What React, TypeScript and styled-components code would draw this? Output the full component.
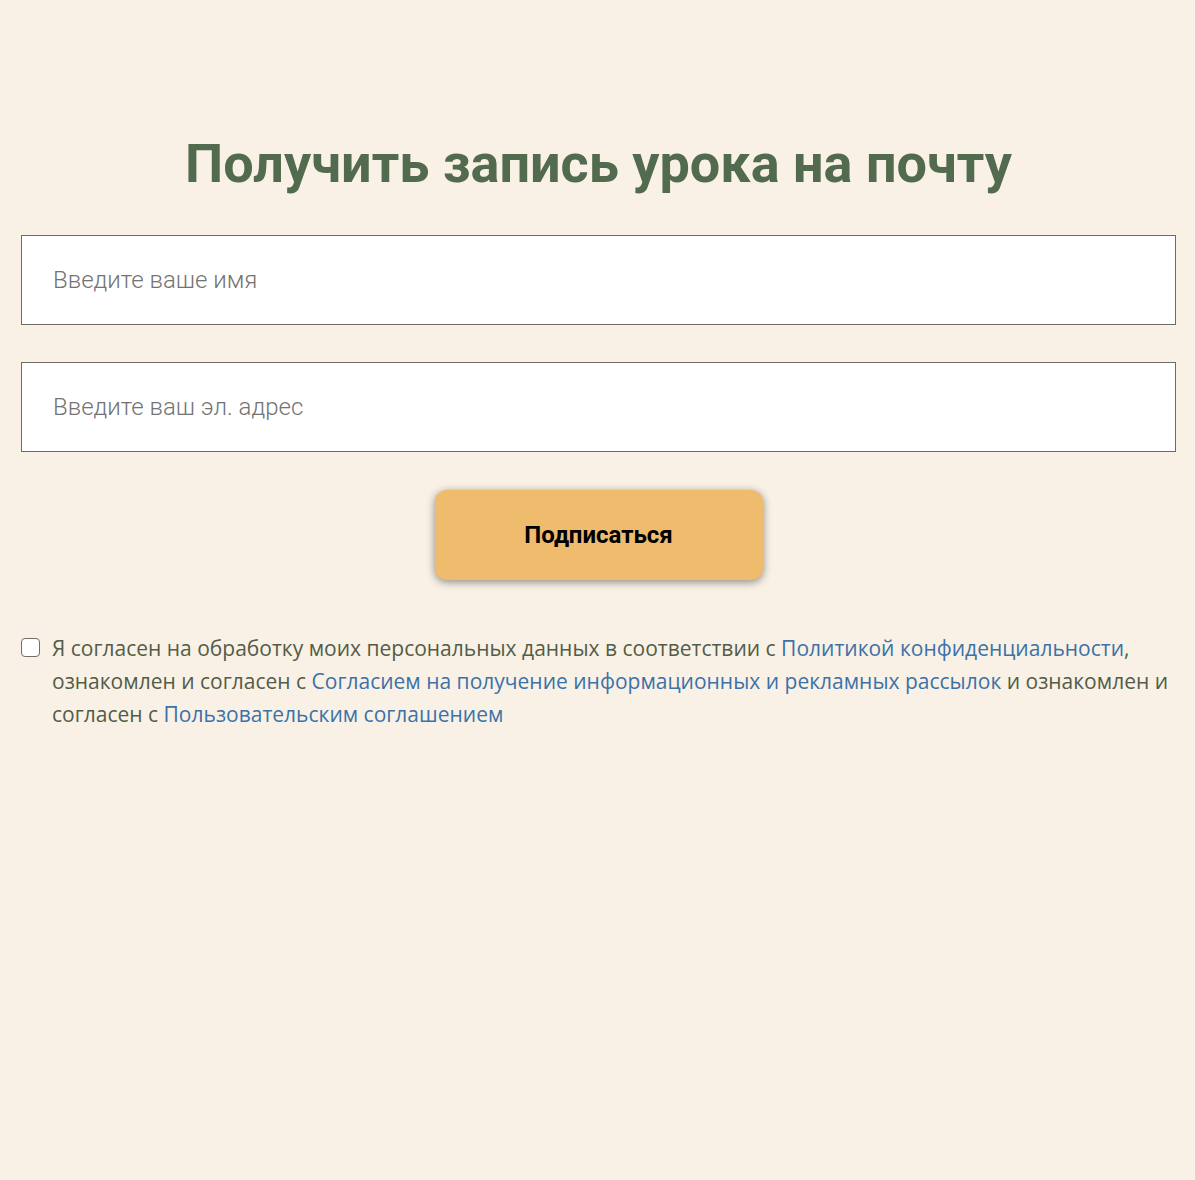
import styled, { createGlobalStyle } from "styled-components";

const GlobalStyle = createGlobalStyle`
  html, body {
    margin: 0;
    padding: 0;
    background: #f9f1e6;
  }
  * {
    box-sizing: border-box;
  }
`;

const Page = styled.div`
  min-height: 1180px;
  padding: 132px 19px 0 21px;
  background: #f9f1e6;
`;

const Title = styled.h2`
  margin: 0 0 39px;
  text-align: center;
  font-family: Roboto, "Liberation Sans", sans-serif;
  font-weight: 700;
  font-size: 54px;
  line-height: 64px;
  color: #526a4d;
`;

const Form = styled.form`
  display: flex;
  flex-direction: column;
  gap: 37px;
`;

const Field = styled.input`
  width: 100%;
  height: 90px;
  padding: 0 31px;
  border: 1px solid #6f6a63;
  border-radius: 0;
  background: #fff;
  font-family: Roboto, "Liberation Sans", sans-serif;
  font-weight: 300;
  font-size: 24px;
  color: #333;
  outline: none;

  &::placeholder {
    color: #737373;
  }
`;

const SubmitButton = styled.button`
  align-self: center;
  width: 328px;
  height: 90px;
  margin-top: 1px;
  border: none;
  border-radius: 12px;
  background: #efbc6e;
  box-shadow: 0 2px 8px rgba(0, 0, 0, 0.45);
  font-family: Roboto, "Liberation Sans", sans-serif;
  font-weight: 700;
  font-size: 24px;
  color: #000;
  cursor: pointer;
`;

const Consent = styled.label`
  display: flex;
  align-items: flex-start;
  gap: 12px;
  margin-top: 52px;
  font-family: "Open Sans", "Liberation Sans", sans-serif;
  font-size: 21px;
  line-height: 33px;
  color: #535c46;
`;

const Box = styled.input`
  flex: none;
  width: 19px;
  height: 19px;
  margin: 6px 0 0;
  appearance: none;
  border: 1.5px solid #6e6e6e;
  border-radius: 4px;
  background: #fff;
`;

const Link = styled.a`
  color: #3b72a8;
  text-decoration: none;
`;

export default function App() {
  return (
    <>
      <GlobalStyle />
      <Page>
        <Title>Получить запись урока на почту</Title>
        <Form onSubmit={(e) => e.preventDefault()}>
          <Field type="text" placeholder="Введите ваше имя" />
          <Field type="email" placeholder="Введите ваш эл. адрес" />
          <SubmitButton type="submit">Подписаться</SubmitButton>
        </Form>
        <Consent>
          <Box type="checkbox" />
          <span>
            Я согласен на обработку моих персональных данных в соответствии с{" "}
            <Link href="#">Политикой конфиденциальности</Link>, ознакомлен и
            согласен с{" "}
            <Link href="#">
              Согласием на получение информационных и рекламных рассылок
            </Link>{" "}
            и ознакомлен и согласен с{" "}
            <Link href="#">Пользовательским соглашением</Link>
          </span>
        </Consent>
      </Page>
    </>
  );
}
